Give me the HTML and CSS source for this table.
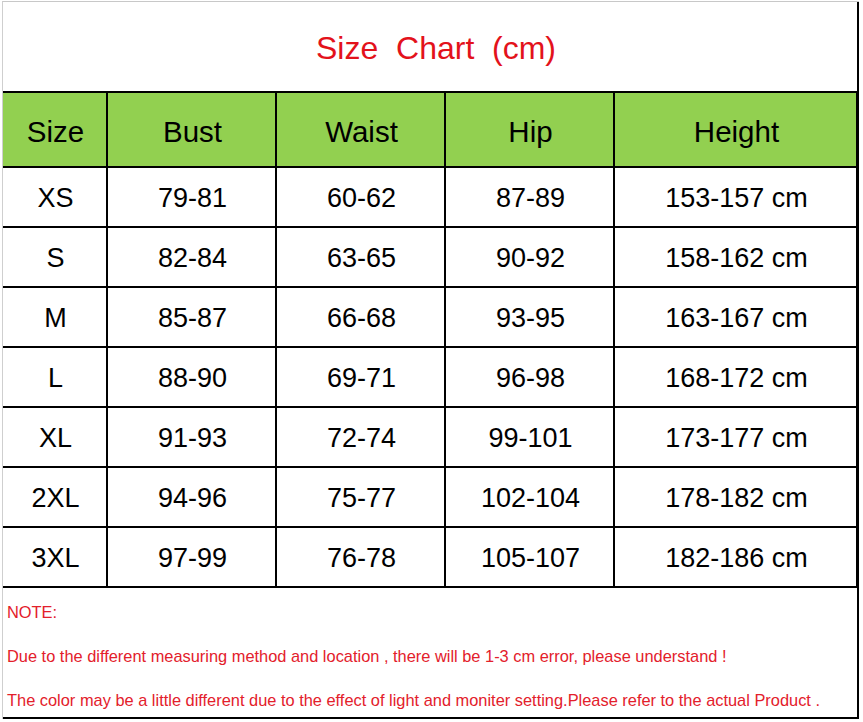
FILE: index.html
```html
<!DOCTYPE html>
<html>
<head>
<meta charset="utf-8">
<link rel="stylesheet" href="styles.css">
</head>
<body>
<div class="sheet">
  <div class="title">Size&nbsp; Chart&nbsp; (cm)</div>
  <div class="chart">
    <div class="cell head">Size</div>
    <div class="cell head">Bust</div>
    <div class="cell head">Waist</div>
    <div class="cell head">Hip</div>
    <div class="cell head">Height</div>

    <div class="cell">XS</div><div class="cell">79-81</div><div class="cell">60-62</div><div class="cell">87-89</div><div class="cell">153-157 cm</div>
    <div class="cell">S</div><div class="cell">82-84</div><div class="cell">63-65</div><div class="cell">90-92</div><div class="cell">158-162 cm</div>
    <div class="cell">M</div><div class="cell">85-87</div><div class="cell">66-68</div><div class="cell">93-95</div><div class="cell">163-167 cm</div>
    <div class="cell">L</div><div class="cell">88-90</div><div class="cell">69-71</div><div class="cell">96-98</div><div class="cell">168-172 cm</div>
    <div class="cell">XL</div><div class="cell">91-93</div><div class="cell">72-74</div><div class="cell">99-101</div><div class="cell">173-177 cm</div>
    <div class="cell">2XL</div><div class="cell">94-96</div><div class="cell">75-77</div><div class="cell">102-104</div><div class="cell">178-182 cm</div>
    <div class="cell">3XL</div><div class="cell">97-99</div><div class="cell">76-78</div><div class="cell">105-107</div><div class="cell">182-186 cm</div>
  </div>
  <div class="notes">
    <p>NOTE:</p>
    <p>Due to the different measuring method and location , there will be 1-3 cm error, please understand !</p>
    <p>The color may be a little different due to the effect of light and moniter setting.Please refer to the actual Product .</p>
  </div>
</div>
</body>
</html>
```

FILE: styles.css
```css
html, body {
  margin: 0;
  padding: 0;
  background: #fff;
}

body {
  font-family: "Liberation Sans", Arial, sans-serif;
}

.sheet {
  margin: 1px 0 0 2px;
  width: 856px;
  border-left: 1px solid #cfcfcf;
  border-top: 1px solid #c8c8c8;
}

.title {
  height: 89px;
  border-right: 2px solid #000;
  display: flex;
  align-items: center;
  justify-content: center;
  padding: 4px 0 0 12px;
  box-sizing: border-box;
  font-size: 32px;
  color: #e3121b;
}

.chart {
  display: grid;
  grid-template-columns: 103px 167px 167px 167px 241px;
  grid-template-rows: 73px repeat(7, 58px);
  gap: 2px;
  background: #000;
  border-top: 2px solid #000;
  border-right: 2px solid #000;
  border-bottom: 2px solid #000;
}

.cell {
  background: #fff;
  display: flex;
  align-items: center;
  justify-content: center;
  font-size: 27px;
  color: #000;
  padding: 3px 0 0 2px;
  box-sizing: border-box;
}

.cell.head {
  background: #92d050;
  font-size: 29.5px;
  padding: 4px 0 0 2px;
}

.notes {
  height: 131px;
  border-right: 2px solid #000;
  border-bottom: 2px solid #000;
  padding: 2px 0 0 4px;
  box-sizing: border-box;
  color: #e3202b;
  font-size: 16.4px;
}

.notes p {
  margin: 0;
  line-height: 44px;
  white-space: nowrap;
}
```
